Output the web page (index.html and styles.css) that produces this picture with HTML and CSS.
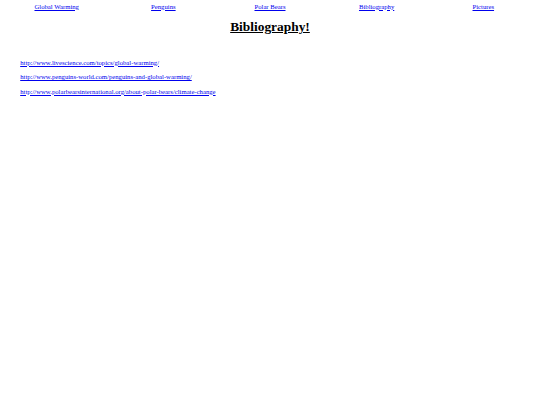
FILE: index.html
```html
<!DOCTYPE html>
<html>
<head>
<meta charset="utf-8">
<title>Bibliography</title>
<link rel="stylesheet" href="styles.css">
</head>
<body class="page">
<nav class="nav">
  <a class="nav-link" href="#">Global Warming</a>
  <a class="nav-link" href="#">Penguins</a>
  <a class="nav-link" href="#">Polar Bears</a>
  <a class="nav-link" href="#">Bibliography</a>
  <a class="nav-link" href="#">Pictures</a>
</nav>
<h1 class="title">Bibliography!</h1>
<div class="sources">
  <p class="source"><a href="#">http://www.livescience.com/topics/global-warming/</a></p>
  <p class="source"><a href="#">http://www.penguins-world.com/penguins-and-global-warming/</a></p>
  <p class="source"><a href="#">http://www.polarbearsinternational.org/about-polar-bears/climate-change</a></p>
</div>
</body>
</html>
```

FILE: styles.css
```css
html, body {
  background: #ffffff;
}
.page {
  margin: 2px 3.4px 3.4px;
  font-family: "Liberation Serif", "Times New Roman", serif;
  font-size: 6.7px;
  color: #000;
}
a {
  color: #0000ee;
  text-decoration: underline;
}
.nav {
  display: grid;
  grid-template-columns: repeat(5, 1fr);
  text-align: center;
  padding: 0.8px 0;
  line-height: 7.7px;
}
.title {
  font-size: 13.4px;
  font-weight: bold;
  text-align: center;
  text-decoration: underline;
  margin: 8px 0 0;
  line-height: 15.4px;
}
.sources {
  padding: 17.2px 0 0 16.8px;
}
.source {
  margin: 6.8px 0;
  line-height: 7.8px;
}
```
